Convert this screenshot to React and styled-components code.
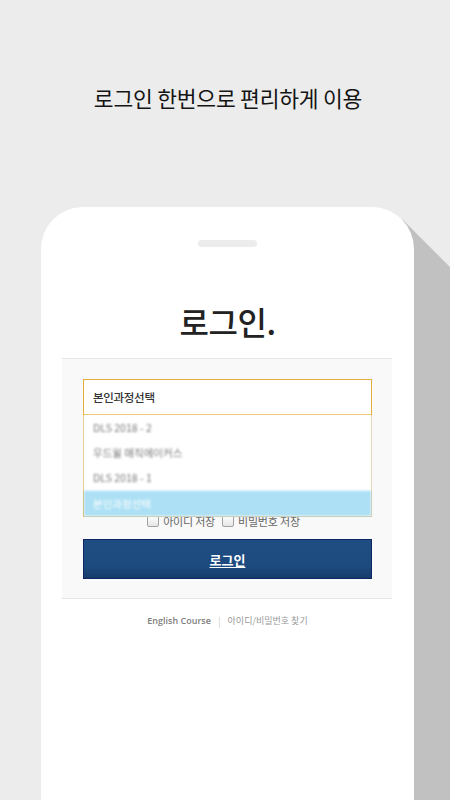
import React from "react";
import styled, { createGlobalStyle } from "styled-components";

const GlobalStyle = createGlobalStyle`
  html, body {
    margin: 0;
    padding: 0;
    background: #ececec;
    overflow: hidden;
  }
  body {
    font-family: "Noto Sans CJK KR", "Noto Sans", sans-serif;
  }
  * { box-sizing: border-box; }
`;

const Screen = styled.div`
  height: 800px;
  display: flex;
  flex-direction: column;
  align-items: center;
  background: #ececec;
  isolation: isolate;
  overflow: hidden;
`;

const Headline = styled.h1`
  margin: 85px 0 0;
  font-size: 21.5px;
  line-height: 26px;
  font-weight: 400;
  color: #141414;
  letter-spacing: -0.2px;
  padding-left: 6px;
`;

const Phone = styled.div`
  position: relative;
  align-self: flex-start;
  margin: 96px 0 0 41px;
  width: 373px;
  flex: 1;
  background: #ffffff;
  border-radius: 42px 42px 0 0;
  display: flex;
  flex-direction: column;
  align-items: center;

  &::before {
    content: "";
    position: absolute;
    left: 0;
    top: 0;
    width: 1400px;
    height: 1400px;
    background: #c1c1c1;
    z-index: -1;
    clip-path: polygon(345px 12px, 361px 12px, 1400px 1051px, 1400px 1400px, 345px 1400px);
  }
`;

const Speaker = styled.div`
  margin-top: 33px;
  width: 59px;
  height: 7px;
  border-radius: 4px;
  background: #ececec;
`;

const Title = styled.h2`
  margin: 54px 0 0;
  font-size: 32px;
  line-height: 40px;
  font-weight: 500;
  color: #222;
  letter-spacing: -0.5px;
`;

const Panel = styled.div`
  margin-top: 17px;
  width: 330px;
  align-self: flex-start;
  margin-left: 21px;
  background: #f9f9f9;
  border-top: 1px solid #e6e6e6;
  border-bottom: 1px solid #e6e6e6;
  padding: 20px 20px 19px 21px;
  display: flex;
  flex-direction: column;
`;

const SelectWrap = styled.div`
  position: relative;
  z-index: 2;
`;

const SelectBox = styled.div`
  height: 36px;
  border: 1px solid #e5ad3a;
  background: #fff;
  display: flex;
  align-items: center;
  padding-left: 9px;
  font-size: 11.5px;
  font-weight: 500;
  color: #333;
  letter-spacing: -0.3px;
`;

const Dropdown = styled.ul`
  position: absolute;
  top: 36px;
  left: 0;
  right: 0;
  margin: 0;
  padding: 0;
  list-style: none;
  background: #fff;
  border: 1px solid #dcc79c;
  border-left-color: #e2b65a;
  border-top: none;
`;

const Option = styled.li`
  height: ${(p) => (p.$active ? "26px" : "25px")};
  display: flex;
  align-items: center;
  padding-left: 9px;
  font-size: 10.5px;
  color: ${(p) => (p.$active ? "#ffffff" : "#7a7a7a")};
  background: ${(p) => (p.$active ? "#ade0f4" : "#fff")};
  border-top: ${(p) => (p.$active ? "1px solid #e8f6fc" : "none")};
  filter: blur(1.1px);
`;

const Field = styled.input`
  margin-top: 5px;
  height: 34px;
  border: 1px solid #d7d7d7;
  background: #fff;
  padding: 0 9px;
  font-family: inherit;
  font-size: 11px;
`;

const CheckRow = styled.div`
  margin-top: 20px;
  height: 16px;
  display: flex;
  justify-content: center;
  align-items: center;
  gap: 7px;
  padding-right: 8px;
`;

const CheckItem = styled.label`
  display: flex;
  align-items: center;
  gap: 4px;
  font-size: 11px;
  color: #666;
  letter-spacing: -0.2px;
`;

const Box = styled.span`
  width: 12px;
  height: 12px;
  border: 1px solid #a3a3a3;
  border-radius: 2px;
  background: linear-gradient(#ffffff, #e6e6e6);
`;

const LoginButton = styled.button`
  margin-top: 10px;
  height: 40px;
  border: 1px solid #0d2766;
  background: linear-gradient(#1f4d82 0%, #1d4a7e 70%, #163b6a 100%);
  color: #fff;
  font-family: inherit;
  font-size: 13px;
  font-weight: 700;
  text-decoration: underline;
  text-underline-offset: 2px;
  cursor: pointer;
`;

const Footer = styled.div`
  margin-top: 16px;
  display: flex;
  align-items: center;
  gap: 7px;
  line-height: 12px;
  padding-left: 0;
`;

const FooterLink = styled.span`
  color: ${(p) => (p.$strong ? "#7e7e7e" : "#999")};
  font-weight: ${(p) => (p.$strong ? 600 : 400)};
  font-size: 9px;
  font-family: ${(p) => (p.$strong ? '"Open Sans", "Noto Sans CJK KR", sans-serif' : "inherit")};
`;

const Divider = styled.span`
  color: #cfcfcf;
  font-size: 10px;
`;

export default function App() {
  const options = ["DLS 2018 - 2", "우드윌 매직에이커스", "DLS 2018 - 1"];
  return (
    <>
      <GlobalStyle />
      <Screen>
        <Headline>로그인 한번으로 편리하게 이용</Headline>
        <Phone>
          <Speaker />
          <Title>로그인.</Title>
          <Panel>
            <SelectWrap>
              <SelectBox>본인과정선택</SelectBox>
              <Dropdown>
                {options.map((o) => (
                  <Option key={o}>{o}</Option>
                ))}
                <Option $active>본인과정선택</Option>
              </Dropdown>
            </SelectWrap>
            <Field placeholder="아이디" />
            <Field placeholder="비밀번호" type="password" />
            <CheckRow>
              <CheckItem>
                <Box />
                아이디 저장
              </CheckItem>
              <CheckItem>
                <Box />
                비밀번호 저장
              </CheckItem>
            </CheckRow>
            <LoginButton>로그인</LoginButton>
          </Panel>
          <Footer>
            <FooterLink $strong>English Course</FooterLink>
            <Divider>|</Divider>
            <FooterLink>아이디/비밀번호 찾기</FooterLink>
          </Footer>
        </Phone>
      </Screen>
    </>
  );
}
